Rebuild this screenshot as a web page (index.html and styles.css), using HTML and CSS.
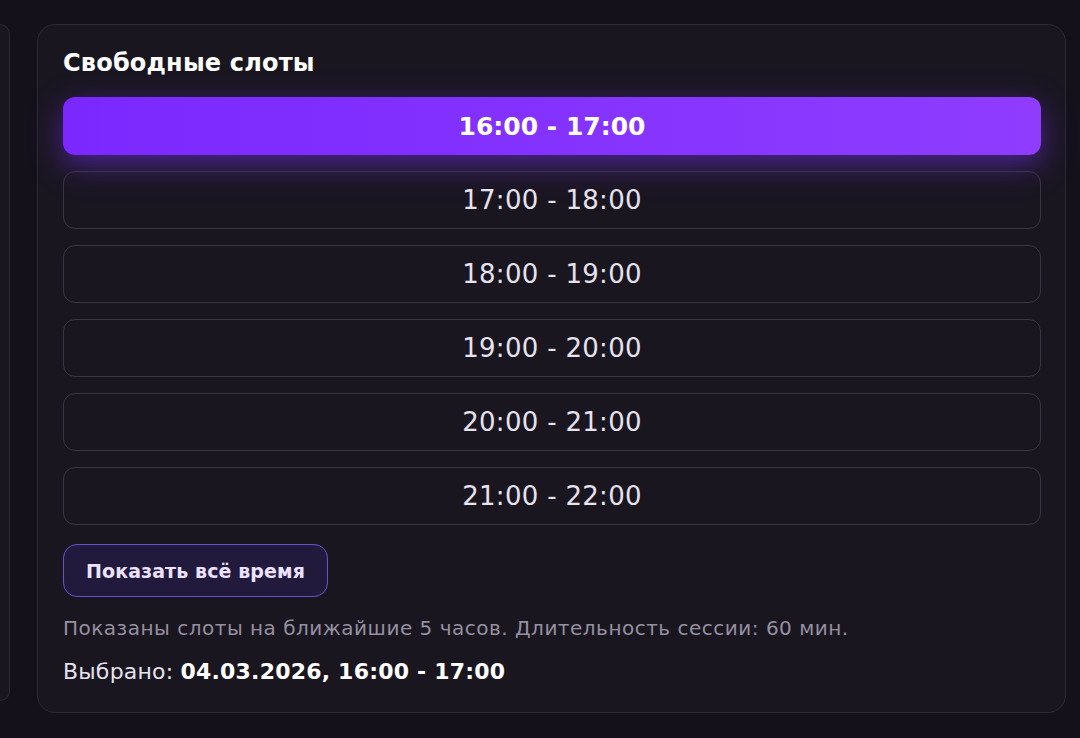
FILE: index.html
```html
<!DOCTYPE html>
<html lang="ru">
<head>
<meta charset="utf-8">
<link rel="stylesheet" href="styles.css">
</head>
<body>
<div class="layout">
  <div class="side-card"></div>
  <section class="card">
    <h2 class="title">Свободные слоты</h2>
    <div class="slots">
      <button class="slot slot-active">16:00 - 17:00</button>
      <button class="slot">17:00 - 18:00</button>
      <button class="slot">18:00 - 19:00</button>
      <button class="slot">19:00 - 20:00</button>
      <button class="slot">20:00 - 21:00</button>
      <button class="slot">21:00 - 22:00</button>
    </div>
    <button class="show-all">Показать всё время</button>
    <p class="hint">Показаны слоты на ближайшие 5 часов. Длительность сессии: 60 мин.</p>
    <p class="selected">Выбрано: <strong>04.03.2026, 16:00 - 17:00</strong></p>
  </section>
</div>
</body>
</html>
```
FILE: styles.css
```css
html, body {
  margin: 0;
  padding: 0;
  background: #15111b;
  height: 100%;
}
body {
  font-family: "DejaVu Sans", "Noto Sans", sans-serif;
  color: #e6e2ee;
  overflow: hidden;
}
.layout {
  display: grid;
  grid-template-columns: 10px 1029px;
  column-gap: 27px;
  padding-top: 24px;
  align-items: start;
}
.side-card {
  height: 675px;
  border: 1px solid #2e2936;
  border-left: none;
  border-radius: 0 16px 16px 0;
  background: #1a1620;
}
.card {
  box-sizing: border-box;
  height: 689px;
  border: 1px solid #2e2936;
  border-radius: 18px;
  background: #1a1620;
  padding: 22px 24px 0 25px;
}
.title {
  margin: 0 0 18px;
  font-size: 24px;
  line-height: 32px;
  font-weight: 700;
  color: #ffffff;
  letter-spacing: 0.2px;
}
.slots {
  display: flex;
  flex-direction: column;
  gap: 16px;
}
.slot {
  box-sizing: border-box;
  height: 58px;
  border: 1px solid #3a3542;
  border-radius: 12px;
  background: transparent;
  font-family: inherit;
  font-size: 26px;
  font-weight: 400;
  color: #e6e2ee;
  letter-spacing: 0.3px;
  padding: 0;
}
.slot-active {
  border: none;
  background: linear-gradient(90deg, #7a28ff 0%, #8f3cff 100%);
  color: #ffffff;
  font-size: 25px;
  font-weight: 700;
  letter-spacing: 0;
  box-shadow: 0 10px 30px rgba(122, 50, 255, 0.5);
}
.show-all {
  margin-top: 19px;
  box-sizing: border-box;
  height: 53px;
  width: 265px;
  border: 1px solid #6b4fd1;
  border-radius: 14px;
  background: #221a3d;
  color: #ece2ff;
  font-family: inherit;
  font-size: 19px;
  font-weight: 700;
  letter-spacing: 0.1px;
  padding: 0;
}
.hint {
  margin: 16px 0 0;
  font-size: 20px;
  line-height: 30px;
  color: #9590a0;
  letter-spacing: 0.5px;
}
.selected {
  margin: 14px 0 0;
  font-size: 22px;
  line-height: 30px;
  color: #e6e2ee;
  letter-spacing: 0.2px;
}
.selected strong {
  font-weight: 700;
  color: #ffffff;
}
```
